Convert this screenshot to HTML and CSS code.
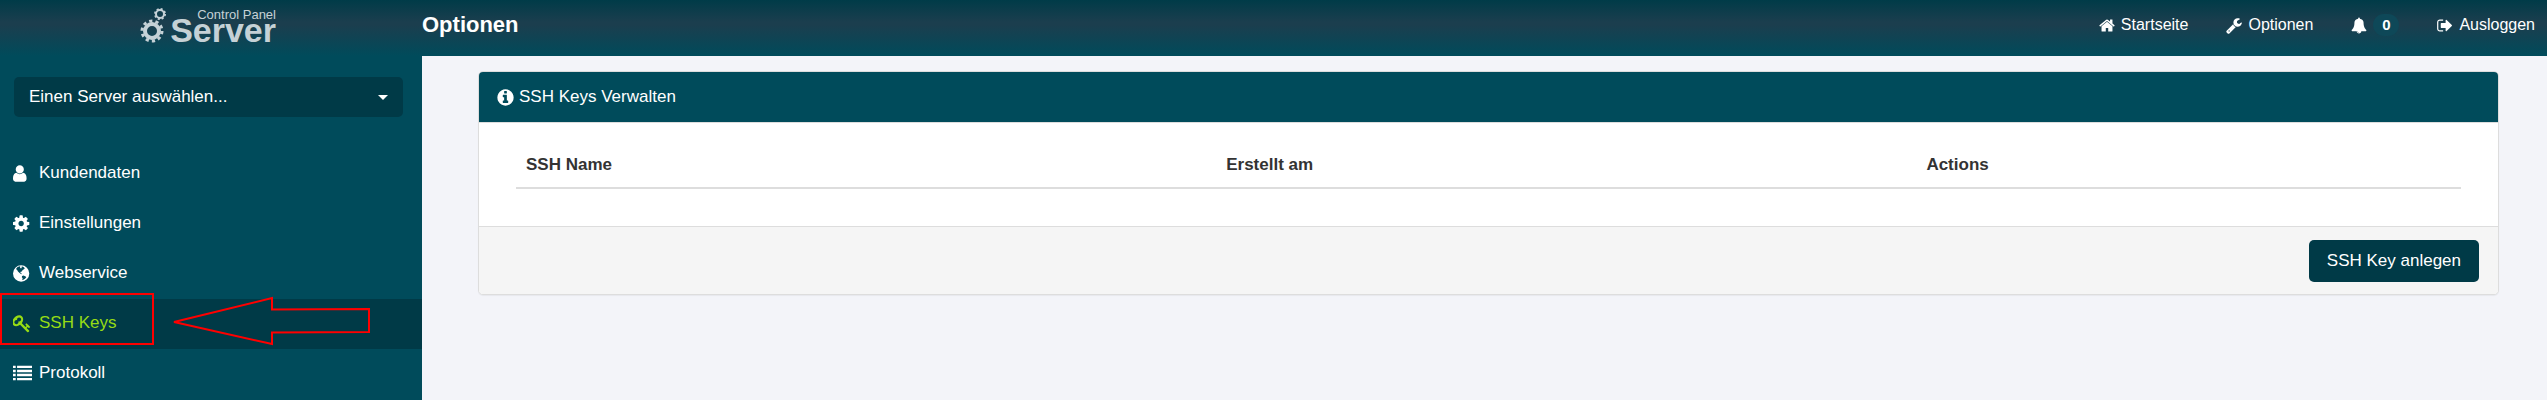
FILE: index.html
```html
<!DOCTYPE html>
<html lang="de">
<head>
<meta charset="utf-8">
<title>Optionen</title>
<link rel="stylesheet" href="styles.css">
</head>
<body>
<svg class="defs" aria-hidden="true">
  <symbol id="cog" viewBox="128 0 1536 1792" preserveAspectRatio="xMinYMid"><path d="M1152 896q0-106-75-181t-181-75-181 75-75 181 75 181 181 75 181-75 75-181zm512-109v222q0 12-8 23t-20 13l-185 28q-19 54-39 91 35 50 107 138 10 12 10 25t-9 23q-27 37-99 108t-94 71q-12 0-26-9l-138-108q-44 23-91 38-16 136-29 186-7 28-36 28h-222q-14 0-24.500-8.500t-11.500-21.500l-28-184q-49-16-90-37l-141 107q-10 9-25 9-14 0-25-11-126-114-165-168-7-10-7-23 0-12 8-23 15-21 51-66.500t54-70.500q-27-50-41-99l-183-27q-13-2-21-12.500t-8-23.500v-222q0-12 8-23t19-13l186-28q14-46 39-92-40-57-107-138-10-12-10-24 0-10 9-23 26-36 98.500-107.500t94.500-71.500q13 0 26 10l138 107q44-23 91-38 16-136 29-186 7-28 36-28h222q14 0 24.500 8.500t11.500 21.500l28 184q49 16 90 37l142-107q9-9 24-9 13 0 25 10 129 119 165 170 7 8 7 22 0 12-8 23-15 21-51 66.500t-54 70.500q26 50 41 98l183 28q13 2 21 12.500t8 23.500z"/></symbol>
  <symbol id="user" viewBox="256 0 1280 1792" preserveAspectRatio="xMinYMid"><path d="M1536 1399q0 109-62.500 187t-150.500 78h-854q-88 0-150.500-78t-62.500-187q0-85 8.500-160.500t31.500-152 58.500-131 94-89 134.500-34.500q131 128 313 128t313-128q76 0 134.500 34.500t94 89 58.500 131 31.500 152 8.500 160.500zm-256-887q0 159-112.500 271.500t-271.500 112.500-271.500-112.500-112.500-271.500 112.500-271.500 271.500-112.500 271.500 112.500 112.500 271.500z"/></symbol>
  <symbol id="globe" viewBox="128 0 1536 1792" preserveAspectRatio="xMinYMid"><path fill-rule="evenodd" d="M896 128a768 768 0 1 0 0 1536a768 768 0 1 0 0-1536zM440 420L560 290L760 220L820 250L780 340L880 420L960 360L920 260L1040 230L1180 330L1230 450L1120 520L1020 580L960 700L860 720L800 800L900 850L960 960L880 940L720 820L600 700L520 560L430 500zM980 1140L1120 1080L1320 1180L1380 1260L1260 1400L1060 1520L1000 1500L1040 1340L960 1240z"/></symbol>
  <symbol id="key" viewBox="64 0 1664 1792" preserveAspectRatio="xMinYMid"><path d="M832 512q0-80-56-136t-136-56-136 56-56 136q0 42 19 83-41-19-83-19-80 0-136 56t-56 136 56 136 136 56 136-56 56-136q0-42-19-83 41 19 83 19 80 0 136-56t56-136zm851 704q0 17-49 66t-66 49q-9 0-28.500-16t-36.500-33-38.500-40-24.500-26l-96 96 220 220q28 28 28 68 0 42-39 81t-81 39q-40 0-68-28l-671-671q-176 131-365 131-163 0-265.500-102.500t-102.500-265.500q0-160 95-313t248-248 313-95q163 0 265.500 102.500t102.500 265.500q0 189-131 365l355 355 96-96q-3-3-26-24.500t-40-38.500-33-36.500-16-28.500q0-17 49-66t66-49q13 0 23 10 6 6 46 44.500t82 79.500 86.500 86 73 78 28.500 41z"/></symbol>
  <symbol id="list" viewBox="0 0 1792 1792"><path d="M0 160h256v224h-256zM384 160h1408v224h-1408zM0 544h256v224h-256zM384 544h1408v224h-1408zM0 928h256v224h-256zM384 928h1408v224h-1408zM0 1312h256v224h-256zM384 1312h1408v224h-1408z"/></symbol>
  <symbol id="home" viewBox="64 0 1664 1792"><path d="M1472 992v480q0 26-19 45t-45 19h-384v-384h-256v384h-384q-26 0-45-19t-19-45v-480q0-1 .5-3t.5-3l575-474 575 474q1 2 1 6zm223-69l-62 74q-8 9-21 11h-3q-13 0-21-7l-692-577-692 577q-12 8-24 7-13-2-21-11l-62-74q-8-10-7-23.500t11-21.500l719-599q32-26 76-26t76 26l244 204v-195q0-14 9-23t23-9h192q14 0 23 9t9 23v408l219 182q10 8 11 21.500t-7 23.500z"/></symbol>
  <symbol id="wrench" viewBox="64 0 1664 1792"><path d="M448 1472q0-26-19-45t-45-19-45 19-19 45 19 45 45 19 45-19 19-45zm644-420l-682 682q-37 37-90 37-52 0-91-37l-106-108q-38-36-38-90 0-53 38-91l681-681q39 98 114.500 173.500t173.500 114.500zm634-435q0 39-23 106-47 134-164.500 217.500t-258.500 83.500q-185 0-316.500-131.500t-131.500-316.500 131.500-316.500 316.500-131.500q58 0 121.500 16.500t107.500 46.500q16 11 16 28t-16 28l-293 169v224l193 107q5-3 79-48.500t135.500-81 70.500-35.500q15 0 23.500 10t8.500 25z"/></symbol>
  <symbol id="bell" viewBox="0 0 1792 1792"><path d="M912 1696q0-16-16-16-59 0-101.500-42.500t-42.500-101.500q0-16-16-16t-16 16q0 73 51.500 124.500t124.500 51.500q16 0 16-16zm816-288q0 52-38 90t-90 38h-448q0 106-75 181t-181 75-181-75-75-181h-448q-52 0-90-38t-38-90q50-42 91-88t85-119.500 74.500-158.500 50-206 19.500-260q0-152 117-282.500t307-158.500q-8-19-8-39 0-40 28-68t68-28 68 28 28 68q0 20-8 39 190 28 307 158.500t117 282.500q0 139 19.500 260t50 206 74.500 158.500 85 119.500 91 88z"/></symbol>
  <symbol id="signout" viewBox="64 0 1664 1792"><path d="M704 1440q0 4 1 20t.5 26.500-3 23.500-10 19.500-20.500 6.500h-320q-119 0-203.500-84.500t-84.500-203.500v-704q0-119 84.500-203.500t203.500-84.500h320q13 0 22.500 9.500t9.500 22.500q0 4 1 20t.5 26.500-3 23.500-10 19.500-20.500 6.500h-320q-66 0-113 47t-47 113v704q0 66 47 113t113 47h312l11.500 1 11.500 3 8 5.500 7 9 2 13.500zm928-544q0 26-19 45l-544 544q-19 19-45 19t-45-19-19-45v-288h-448q-26 0-45-19t-19-45v-384q0-26 19-45t45-19h448v-288q0-26 19-45t45-19 45 19l544 544q19 19 19 45z"/></symbol>
  <symbol id="info" viewBox="128 0 1536 1792"><path d="M1152 1376v-160q0-14-9-23t-23-9h-96v-512q0-14-9-23t-23-9h-320q-14 0-23 9t-9 23v160q0 14 9 23t23 9h96v320h-96q-14 0-23 9t-9 23v160q0 14 9 23t23 9h448q14 0 23-9t9-23zm-128-896v-160q0-14-9-23t-23-9h-192q-14 0-23 9t-9 23v160q0 14 9 23t23 9h192q14 0 23-9t9-23zm640 416q0 209-103 385.500t-279.500 279.500-385.500 103-385.500-103-279.500-279.500-103-385.500 103-385.500 279.500-279.500 385.500-103 385.500 103 279.500 279.500 103 385.500z"/></symbol>
</svg>

<header class="topbar">
  <a class="brand" href="#" aria-label="Server Control Panel">
    <svg class="logo" viewBox="0 0 136 49">
      <g fill="none">
        <circle cx="11" cy="24" r="7" stroke-width="4"/>
        <circle cx="11" cy="24" r="10" stroke-width="3" stroke-dasharray="3.200 3.083"/>
        <circle cx="19" cy="7" r="4" stroke-width="2"/>
        <circle cx="19" cy="7" r="5" stroke-width="2" stroke-dasharray="2 1.927"/>
      </g>
      <text class="logo-small" x="135" y="12" text-anchor="end">Control Panel</text>
      <text class="logo-big" x="135" y="35" text-anchor="end">Server</text>
    </svg>
  </a>
  <h1 class="title">Optionen</h1>
  <nav class="topnav">
    <a href="#"><svg class="icon"><use href="#home"/></svg>Startseite</a>
    <a href="#"><svg class="icon"><use href="#wrench"/></svg>Optionen</a>
    <a href="#"><svg class="icon"><use href="#bell"/></svg><span class="badge">0</span></a>
    <a href="#"><svg class="icon"><use href="#signout"/></svg>Ausloggen</a>
  </nav>
</header>

<div class="layout">
  <aside class="sidebar">
    <div class="picker">
      <select class="server" aria-label="Server">
        <option>Einen Server auswählen...</option>
      </select>
      <svg class="caret" viewBox="0 0 10 5"><path d="M0 0H10L5 5Z"/></svg>
    </div>
    <nav class="menu">
      <a href="#"><svg class="icon"><use href="#user"/></svg>Kundendaten</a>
      <a href="#"><svg class="icon"><use href="#cog"/></svg>Einstellungen</a>
      <a href="#"><svg class="icon"><use href="#globe"/></svg>Webservice</a>
      <a href="#" class="active"><svg class="icon"><use href="#key"/></svg>SSH Keys
        <span class="marker"></span>
        <svg class="arrow" viewBox="0 0 202 52"><path d="M4 28L102 4V15.500L199 15V38L102 38.500V50Z"/></svg>
      </a>
      <a href="#"><svg class="icon"><use href="#list"/></svg>Protokoll</a>
    </nav>
  </aside>
  <main class="content">
    <section class="panel">
      <h2 class="panel-head"><svg class="icon"><use href="#info"/></svg>SSH Keys Verwalten</h2>
      <div class="panel-body">
        <table class="keys">
          <thead>
            <tr><th class="name">SSH Name</th><th class="created">Erstellt am</th><th>Actions</th></tr>
          </thead>
        </table>
      </div>
      <footer class="panel-foot"><button class="create" type="button">SSH Key anlegen</button></footer>
    </section>
  </main>
</div>
</body>
</html>
```
FILE: styles.css
```css
* { box-sizing: border-box; }
body {
  margin: 0;
  min-height: 100vh;
  display: flex;
  flex-direction: column;
  background: #f3f4f9;
  color: #333;
  font: 17px/24px "Liberation Sans", Arial, sans-serif;
}
a { color: inherit; text-decoration: none; }
.defs { display: none; }
.icon { flex: none; fill: currentColor; }

.topbar {
  display: flex;
  height: 56px;
  color: #fff;
  background: linear-gradient(#003b48, #1b3e4e 22px, #1b3e4e 25px, #004b5b);
}
.brand { flex: none; width: 422px; padding: 7px 0 0 141px; }
.logo { display: block; width: 136px; height: 49px; overflow: visible; fill: #c5d1d6; }
.logo g { stroke: #c5d1d6; }
.logo-small { font-size: 13px; }
.logo-big { font-size: 34px; font-weight: bold; }
.title { margin: 0; font-size: 22px; line-height: 50px; }
.topnav {
  display: flex;
  align-items: center;
  gap: 38px;
  height: 50px;
  margin-left: auto;
  padding-right: 12px;
  font-size: 16px;
}
.topnav a { display: flex; align-items: center; gap: 6px; }
.topnav .icon { width: 16px; height: 17px; }
.badge {
  width: 26px;
  border-radius: 11px;
  background: #0e4858;
  font-size: 15px;
  font-weight: bold;
  line-height: 22px;
  text-align: center;
}

.layout { flex: 1; display: flex; }
.sidebar { flex: none; width: 422px; background: #004b5b; color: #fff; }
.picker { position: relative; padding: 21px 19px 32px 14px; }
.server {
  display: block;
  width: 100%;
  height: 40px;
  padding: 0 40px 0 15px;
  border: 0;
  border-radius: 5px;
  appearance: none;
  background: #003a47;
  color: #fff;
  font: inherit;
}
.caret {
  position: absolute;
  right: 34px;
  top: 39px;
  width: 10px;
  height: 5px;
  fill: #fff;
  pointer-events: none;
}
.menu a {
  position: relative;
  display: flex;
  align-items: center;
  height: 50px;
  padding: 0 0 2px 13px;
}
.menu .icon { width: 19px; height: 19px; margin-right: 7px; }
.menu .active { background: #003a47; color: #96dc14; }
.marker {
  position: absolute;
  left: 0;
  top: -6px;
  width: 154px;
  height: 52px;
  border: 2px solid #f00;
}
.arrow {
  position: absolute;
  left: 170px;
  top: -5px;
  width: 202px;
  height: 52px;
  fill: none;
  stroke: #f00;
  stroke-width: 2;
}

.content { flex: 1; padding: 15px 48px 0 56px; }
.panel {
  border: 1px solid #ddd;
  border-radius: 5px;
  background: #fff;
  box-shadow: 0 1px 1px rgba(0, 0, 0, .05);
  overflow: hidden;
}
.panel-head {
  display: flex;
  align-items: center;
  gap: 5px;
  height: 51px;
  margin: 0;
  padding-left: 18px;
  border-bottom: 1px solid #ddd;
  background: #004b5b;
  color: #fff;
  font-size: 17px;
  font-weight: normal;
}
.panel-head .icon { width: 17px; height: 19px; }
.panel-body { padding: 19px 37px 37px; }
.keys { width: 100%; border-collapse: separate; border-spacing: 0; table-layout: fixed; }
.keys th { padding: 11px 10px 10px; border-bottom: 2px solid #ddd; text-align: left; }
.keys .name { width: 36%; }
.keys .created { width: 36%; }
.panel-foot {
  display: flex;
  justify-content: flex-end;
  padding: 13px 19px 12px;
  border-top: 1px solid #ddd;
  background: #f5f5f5;
}
.create {
  height: 42px;
  padding: 0 18px;
  border: 0;
  border-radius: 5px;
  background: #003a47;
  color: #fff;
  font: inherit;
}
```
